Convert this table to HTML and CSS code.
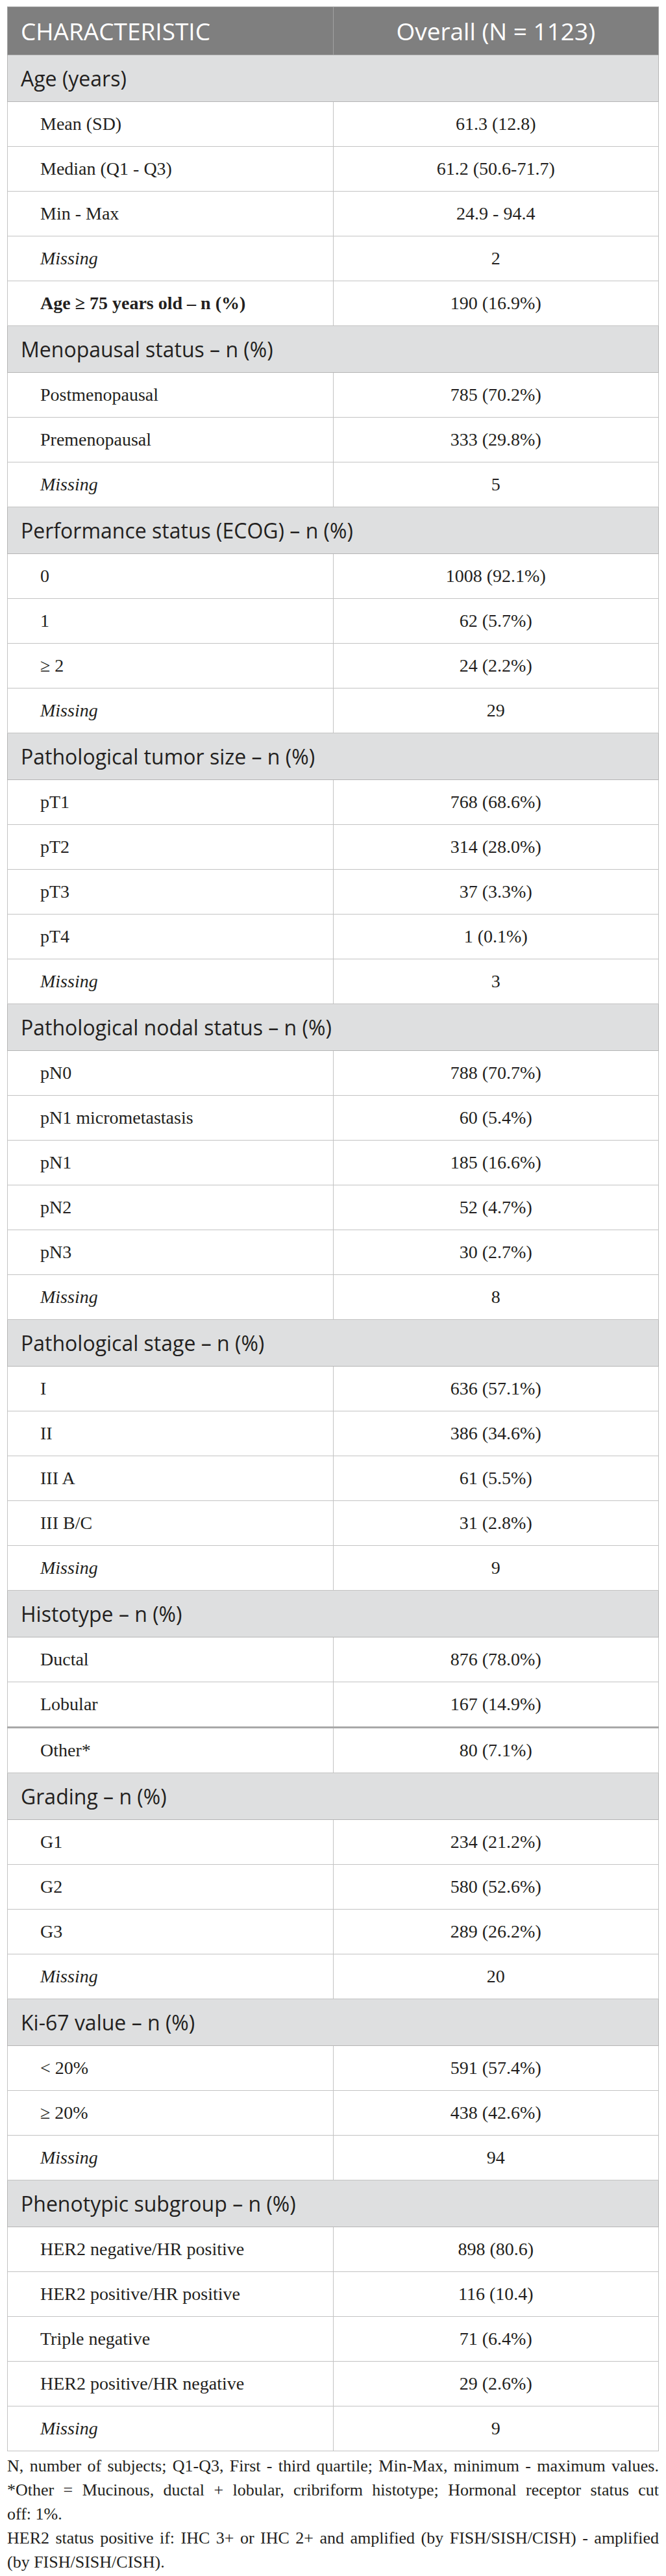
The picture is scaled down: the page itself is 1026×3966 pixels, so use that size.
FILE: index.html
```html
<!DOCTYPE html>
<html lang="en">

<head>
    <meta charset="UTF-8">
    <meta name="viewport" content="width=device-width, initial-scale=1.0">
    <link rel="stylesheet" href="styles.css">
    <title>Patient characteristics</title>
</head>

<body>
    <table class="stats">
        <thead>
            <tr class="head">
                <th class="label">CHARACTERISTIC</th>
                <th class="value">Overall (N = 1123)</th>
            </tr>
        </thead>
        <tbody>
            <tr class="section"><td colspan="2">Age (years)</td></tr>
            <tr><td class="label">Mean (SD)</td><td class="value">61.3 (12.8)</td></tr>
            <tr><td class="label">Median (Q1 - Q3)</td><td class="value">61.2 (50.6-71.7)</td></tr>
            <tr><td class="label">Min - Max</td><td class="value">24.9 - 94.4</td></tr>
            <tr><td class="label missing">Missing</td><td class="value">2</td></tr>
            <tr><td class="label strong">Age ≥ 75 years old – n (%)</td><td class="value">190 (16.9%)</td></tr>

            <tr class="section"><td colspan="2">Menopausal status – n (%)</td></tr>
            <tr><td class="label">Postmenopausal</td><td class="value">785 (70.2%)</td></tr>
            <tr><td class="label">Premenopausal</td><td class="value">333 (29.8%)</td></tr>
            <tr><td class="label missing">Missing</td><td class="value">5</td></tr>

            <tr class="section"><td colspan="2">Performance status (ECOG) – n (%)</td></tr>
            <tr><td class="label">0</td><td class="value">1008 (92.1%)</td></tr>
            <tr><td class="label">1</td><td class="value">62 (5.7%)</td></tr>
            <tr><td class="label">≥ 2</td><td class="value">24 (2.2%)</td></tr>
            <tr><td class="label missing">Missing</td><td class="value">29</td></tr>

            <tr class="section"><td colspan="2">Pathological tumor size – n (%)</td></tr>
            <tr><td class="label">pT1</td><td class="value">768 (68.6%)</td></tr>
            <tr><td class="label">pT2</td><td class="value">314 (28.0%)</td></tr>
            <tr><td class="label">pT3</td><td class="value">37 (3.3%)</td></tr>
            <tr><td class="label">pT4</td><td class="value">1 (0.1%)</td></tr>
            <tr><td class="label missing">Missing</td><td class="value">3</td></tr>

            <tr class="section"><td colspan="2">Pathological nodal status – n (%)</td></tr>
            <tr><td class="label">pN0</td><td class="value">788 (70.7%)</td></tr>
            <tr><td class="label">pN1 micrometastasis</td><td class="value">60 (5.4%)</td></tr>
            <tr><td class="label">pN1</td><td class="value">185 (16.6%)</td></tr>
            <tr><td class="label">pN2</td><td class="value">52 (4.7%)</td></tr>
            <tr><td class="label">pN3</td><td class="value">30 (2.7%)</td></tr>
            <tr><td class="label missing">Missing</td><td class="value">8</td></tr>

            <tr class="section"><td colspan="2">Pathological stage – n (%)</td></tr>
            <tr><td class="label">I</td><td class="value">636 (57.1%)</td></tr>
            <tr><td class="label">II</td><td class="value">386 (34.6%)</td></tr>
            <tr><td class="label">III A</td><td class="value">61 (5.5%)</td></tr>
            <tr><td class="label">III B/C</td><td class="value">31 (2.8%)</td></tr>
            <tr><td class="label missing">Missing</td><td class="value">9</td></tr>

            <tr class="section"><td colspan="2">Histotype – n (%)</td></tr>
            <tr><td class="label">Ductal</td><td class="value">876 (78.0%)</td></tr>
            <tr class="thick"><td class="label">Lobular</td><td class="value">167 (14.9%)</td></tr>
            <tr><td class="label">Other*</td><td class="value">80 (7.1%)</td></tr>

            <tr class="section"><td colspan="2">Grading – n (%)</td></tr>
            <tr><td class="label">G1</td><td class="value">234 (21.2%)</td></tr>
            <tr><td class="label">G2</td><td class="value">580 (52.6%)</td></tr>
            <tr><td class="label">G3</td><td class="value">289 (26.2%)</td></tr>
            <tr><td class="label missing">Missing</td><td class="value">20</td></tr>

            <tr class="section"><td colspan="2">Ki-67 value – n (%)</td></tr>
            <tr><td class="label">&lt; 20%</td><td class="value">591 (57.4%)</td></tr>
            <tr><td class="label">≥ 20%</td><td class="value">438 (42.6%)</td></tr>
            <tr><td class="label missing">Missing</td><td class="value">94</td></tr>

            <tr class="section"><td colspan="2">Phenotypic subgroup – n (%)</td></tr>
            <tr><td class="label">HER2 negative/HR positive</td><td class="value">898 (80.6)</td></tr>
            <tr><td class="label">HER2 positive/HR positive</td><td class="value">116 (10.4)</td></tr>
            <tr><td class="label">Triple negative</td><td class="value">71 (6.4%)</td></tr>
            <tr><td class="label">HER2 positive/HR negative</td><td class="value">29 (2.6%)</td></tr>
            <tr><td class="label missing">Missing</td><td class="value">9</td></tr>
        </tbody>
    </table>

    <div class="notes">
        <p><span class="line">N, number of subjects; Q1-Q3, First - third quartile; Min-Max, minimum - maximum values.</span></p>
        <p><span class="line">*Other = Mucinous, ductal + lobular, cribriform histotype; Hormonal receptor status cut</span> off: 1%.</p>
        <p><span class="line">HER2 status positive if: IHC 3+ or IHC 2+ and amplified (by FISH/SISH/CISH) - amplified</span> (by FISH/SISH/CISH).</p>
    </div>
</body>

</html>
```

FILE: styles.css
```css
body {
    margin: 0;
    padding: 10px 11px 0 11px;
    background-color: #fff;
    font-family: 'Liberation Serif', serif;
    color: #231f20;
}

.stats {
    width: 1004px;
    border-collapse: collapse;
    border: 1px solid #b5b5b5;
}

.stats th,
.stats td {
    width: 50%;
    padding: 0;
    vertical-align: middle;
    border: 1px solid #c3c3c3;
}

/* header row */
.head th {
    height: 73px;
    background-color: #7f7f7f;
    color: #fff;
    font-family: 'Open Sans', sans-serif;
    font-weight: 400;
    font-size: 37px;
    border-color: #a2a2a2;
}

.head th.label {
    text-align: left;
    padding-left: 20px;
}

.head th.value {
    text-align: center;
}

/* group rows */
.section td {
    height: 71px;
    background-color: #dedfe0;
    font-family: 'Open Sans', sans-serif;
    font-size: 32px;
    color: #231f20;
    padding-left: 20px;
    border-color: #b5b5b5;
}

/* data rows */
tbody td {
    height: 68px;
    font-size: 28px;
}

td.label {
    padding-left: 50px;
}

td.value {
    text-align: center;
}

td.missing {
    font-style: italic;
}

td.strong {
    font-weight: 700;
}

tr.thick td {
    border-bottom: 3px solid #a8a8a8;
}

.notes {
    width: 1004px;
    margin-top: 4px;
    font-size: 26px;
    line-height: 37px;
    text-align: justify;
}

.notes p {
    margin: 0;
}

/* force the typeset line breaks of the source footnote */
.notes .line {
    display: block;
    text-align-last: justify;
}
```
